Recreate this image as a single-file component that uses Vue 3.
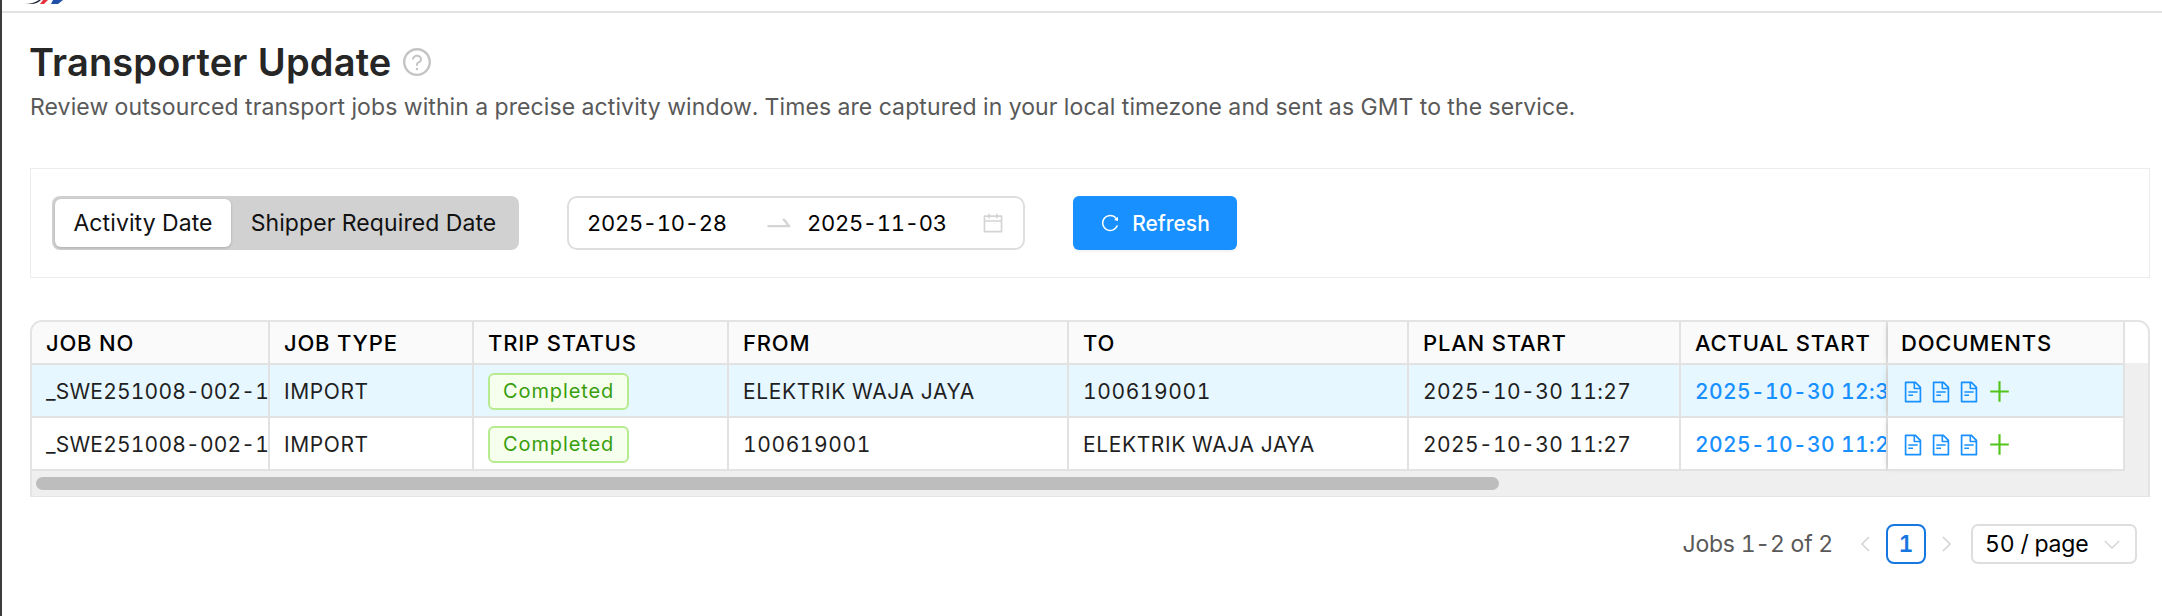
<script setup>
const columns = [
  { key: "jobNo", label: "JOB NO", cls: "c-job" },
  { key: "jobType", label: "JOB TYPE", cls: "c-type" },
  { key: "status", label: "TRIP STATUS", cls: "c-status" },
  { key: "from", label: "FROM", cls: "c-from" },
  { key: "to", label: "TO", cls: "c-to" },
  { key: "planStart", label: "PLAN START", cls: "c-plan" },
  { key: "actualStart", label: "ACTUAL START", cls: "c-actual" },
];

const rows = [
  {
    id: 1,
    jobNo: "_SWE251008-002-1",
    jobType: "IMPORT",
    status: "Completed",
    from: "ELEKTRIK WAJA JAYA",
    to: "100619001",
    planStart: "2025-10-30 11:27",
    actualStart: "2025-10-30 12:35",
    selected: true,
  },
  {
    id: 2,
    jobNo: "_SWE251008-002-1",
    jobType: "IMPORT",
    status: "Completed",
    from: "100619001",
    to: "ELEKTRIK WAJA JAYA",
    planStart: "2025-10-30 11:27",
    actualStart: "2025-10-30 11:28",
    selected: false,
  },
];

const fileIcon =
  "M854.6 288.6L639.4 73.4c-6-6-14.1-9.4-22.6-9.4H192c-17.7 0-32 14.3-32 32v832c0 17.7 14.3 32 32 32h640c17.7 0 32-14.3 32-32V311.3c0-8.5-3.4-16.7-9.4-22.7zM790.2 326H602V137.8L790.2 326zm1.8 562H232V136h302v216a42 42 0 0042 42h216v494zM504 618H320c-4.4 0-8 3.6-8 8v48c0 4.4 3.6 8 8 8h184c4.4 0 8-3.6 8-8v-48c0-4.4-3.6-8-8-8zM312 490v48c0 4.4 3.6 8 8 8h384c4.4 0 8-3.6 8-8v-48c0-4.4-3.6-8-8-8H320c-4.4 0-8 3.6-8 8z";
</script>

<template>
  <div class="shell">
    <header class="topbar">
      <svg class="logo" viewBox="0 0 40 4" width="40" height="4">
        <path d="M0 4 Q8 4 14 0 H16 Q12 4 6 4Z" fill="#1c2233" />
        <path d="M15 4 L18 0 H23 L19 4Z" fill="#e5343f" />
        <path d="M26 4 L28 0 H38 L33 4Z" fill="#1f4fa8" />
      </svg>
    </header>

    <main class="content">
      <div class="title-row">
        <h1>Transporter Update</h1>
        <svg class="help" viewBox="0 0 1024 1024" fill="#c4c4c4">
          <path d="M512 64C264.6 64 64 264.6 64 512s200.6 448 448 448 448-200.6 448-448S759.4 64 512 64zm0 820c-205.4 0-372-166.6-372-372s166.6-372 372-372 372 166.6 372 372-166.6 372-372 372z" />
          <path d="M623.6 316.7C593.6 290.4 554 276 512 276s-81.6 14.5-111.6 40.7C369.2 344 352 380.7 352 420v7.6c0 4.4 3.6 8 8 8h48c4.4 0 8-3.6 8-8V420c0-44.1 43.1-80 96-80s96 35.9 96 80c0 31.1-22 59.6-56.1 72.7-21.2 8.1-39.2 22.3-52.1 40.9-13.1 19-19.9 41.8-19.9 64.9V620c0 4.4 3.6 8 8 8h48c4.4 0 8-3.6 8-8v-22.7a48.3 48.3 0 0130.9-44.8c59-22.7 97.1-74.7 97.1-132.5.1-39.3-17.1-76-48.3-103.3zM472 732a40 40 0 1080 0 40 40 0 10-80 0z" />
        </svg>
      </div>
      <p class="subtitle">
        Review outsourced transport jobs within a precise activity window. Times are captured in your local timezone and sent as GMT to the service.
      </p>

      <section class="filters">
        <div class="segmented">
          <div class="seg-item active">Activity Date</div>
          <div class="seg-item">Shipper Required Date</div>
        </div>

        <div class="range">
          <span class="range-date first">2025-10-28</span>
          <svg class="range-arrow" viewBox="0 0 1024 1024" fill="#d4d4d4">
            <path d="M873.1 596.2l-164-208A32 32 0 00684 376h-64.8c-6.7 0-10.4 7.7-6.3 13l144.3 183H152c-4.4 0-8 3.6-8 8v60c0 4.4 3.6 8 8 8h695.9c26.8 0 41.7-30.8 25.2-51.8z" />
          </svg>
          <span class="range-date">2025-11-03</span>
          <svg class="range-cal" viewBox="0 0 1024 1024" fill="#d4d4d4">
            <path d="M880 184H712v-64c0-4.4-3.6-8-8-8h-56c-4.4 0-8 3.6-8 8v64H384v-64c0-4.4-3.6-8-8-8h-56c-4.4 0-8 3.6-8 8v64H144c-17.7 0-32 14.3-32 32v664c0 17.7 14.3 32 32 32h736c17.7 0 32-14.3 32-32V216c0-17.7-14.3-32-32-32zm-40 656H184V460h656v380zM184 392V256h128v48c0 4.4 3.6 8 8 8h56c4.4 0 8-3.6 8-8v-48h256v48c0 4.4 3.6 8 8 8h56c4.4 0 8-3.6 8-8v-48h128v136H184z" />
          </svg>
        </div>

        <button class="refresh" type="button">
          <svg viewBox="0 0 1024 1024" fill="#fff">
            <path d="M909.1 209.3l-56.4 44.1C775.8 155.1 656.2 92 521.9 92 290 92 102.3 279.5 102 511.5 101.7 743.7 289.8 932 521.9 932c181.3 0 335.8-115 394.6-276.1 1.5-4.2-.7-8.9-4.9-10.3l-56.7-19.5a8 8 0 00-10.1 4.8c-1.8 5-3.8 10-5.9 14.9-17.3 41-42.1 77.8-73.7 109.4A344.77 344.77 0 01655.9 829c-42.3 17.9-87.4 27-133.8 27-46.5 0-91.5-9.1-133.8-27A341.5 341.5 0 01279 755.2a342.16 342.16 0 01-73.7-109.4c-17.9-42.4-27-87.4-27-133.9s9.1-91.5 27-133.9c17.3-41 42.1-77.8 73.7-109.4 31.6-31.6 68.4-56.4 109.3-73.8 42.3-17.9 87.4-27 133.8-27 46.5 0 91.5 9.1 133.8 27a341.5 341.5 0 01109.3 73.8c9.9 9.9 19.2 20.4 27.8 31.4l-60.2 47a8 8 0 003 14.1l175.6 43c5 1.2 9.9-2.6 9.9-7.7l.8-180.9c-.1-6.6-7.8-10.3-13-6.2z" />
          </svg>
          <span>Refresh</span>
        </button>
      </section>

      <section class="table-card">
        <table class="jobs">
          <thead>
            <tr>
              <th v-for="col in columns" :key="col.key" :class="col.cls">{{ col.label }}</th>
              <th class="c-docs">DOCUMENTS</th>
              <th class="c-fill"></th>
            </tr>
          </thead>
          <tbody>
            <tr v-for="row in rows" :key="row.id" :class="{ selected: row.selected }">
              <td class="c-job">{{ row.jobNo }}</td>
              <td class="c-type">{{ row.jobType }}</td>
              <td class="c-status"><span class="tag">{{ row.status }}</span></td>
              <td class="c-from">{{ row.from }}</td>
              <td class="c-to">{{ row.to }}</td>
              <td class="c-plan">{{ row.planStart }}</td>
              <td class="c-actual link">{{ row.actualStart }}</td>
              <td class="c-docs">
                <div class="docs">
                  <svg v-for="n in 3" :key="n" class="doc" viewBox="0 0 1024 1024" fill="#1890ff">
                    <path :d="fileIcon" />
                  </svg>
                  <svg class="plus" viewBox="0 0 1024 1024" fill="#52c41a">
                    <path d="M482 152h60q8 0 8 8v704q0 8-8 8h-60q-8 0-8-8V160q0-8 8-8z" />
                    <path d="M192 474h640q8 0 8 8v60q0 8-8 8H192q-8 0-8-8v-60q0-8 8-8z" />
                  </svg>
                </div>
              </td>
              <td class="c-fill"></td>
            </tr>
          </tbody>
        </table>
        <div class="scroll-track"><div class="scroll-thumb"></div></div>
      </section>

      <footer class="pager">
        <span class="total">Jobs 1-2 of 2</span>
        <svg class="chev" viewBox="0 0 12 20"><path d="M10 3 3 10l7 7" /></svg>
        <span class="page">1</span>
        <svg class="chev" viewBox="0 0 12 20"><path d="M2 3l7 7-7 7" /></svg>
        <div class="size">
          <span>50 / page</span>
          <svg viewBox="0 0 20 12"><path d="M2 2l8 8 8-8" /></svg>
        </div>
      </footer>
    </main>
  </div>
</template>

<style>
html,
body {
  background: #fff;
  overflow: hidden;
}
</style>

<style scoped>
.shell {
  height: 616px;
  box-sizing: border-box;
  border-left: 2px solid #3c3c3c;
  font-family: Inter, "Liberation Sans", sans-serif;
  font-variant-numeric: tabular-nums;
  color: rgba(0, 0, 0, 0.88);
}

.topbar {
  height: 11px;
  border-bottom: 2px solid #e2e2e2;
  padding-left: 23px;
  overflow: hidden;
}
.logo {
  display: block;
}

.content {
  padding: 0 12px 0 28px;
}

.title-row {
  display: flex;
  align-items: center;
  gap: 10px;
  margin-top: 27px;
  height: 44px;
}
h1 {
  margin: 0 0 0 -1px;
  font-size: 38px;
  font-weight: 600;
  letter-spacing: 0.15px;
  color: #262626;
}
.help {
  width: 32px;
  height: 32px;
}
.subtitle {
  margin: 9px 0 0;
  font-size: 23px;
  line-height: 28px;
  letter-spacing: 0.1px;
  color: #595959;
}

.filters {
  display: flex;
  align-items: center;
  margin-top: 47px;
  height: 110px;
  box-sizing: border-box;
  border: 1px solid #ececec;
  padding-left: 21px;
}

.segmented {
  display: flex;
  width: 467px;
  height: 54px;
  box-sizing: border-box;
  padding: 3px;
  border-radius: 8px;
  background: #d1d1d1;
  font-size: 23px;
  letter-spacing: 0.1px;
  white-space: nowrap;
}
.seg-item {
  display: flex;
  align-items: center;
  justify-content: center;
  flex: 1;
  color: #111;
}
.seg-item.active {
  flex: 0 0 176px;
  background: #fff;
  border-radius: 6px;
  box-shadow: 0 1px 3px rgba(0, 0, 0, 0.18);
}

.range {
  display: flex;
  align-items: center;
  width: 458px;
  height: 54px;
  box-sizing: border-box;
  margin-left: 48px;
  padding: 0 18px;
  border: 2px solid #dedede;
  border-radius: 10px;
  font-size: 22px;
  letter-spacing: -0.3px;
  color: #000;
}
.range-date {
  width: 140px;
  white-space: nowrap;
}
.range-date.first {
  width: 176px;
}
.range-arrow {
  width: 32px;
  height: 32px;
  margin-right: 12px;
}
.range-cal {
  width: 24px;
  height: 24px;
  margin-left: auto;
}

.refresh {
  display: flex;
  align-items: center;
  justify-content: center;
  gap: 12px;
  width: 164px;
  height: 54px;
  margin-left: 48px;
  border: none;
  border-radius: 6px;
  background: #1890ff;
  box-shadow: 0 2px 2px rgba(0, 0, 0, 0.05);
  color: #fff;
  font-family: inherit;
  font-size: 21px;
  font-weight: 500;
}
.refresh svg {
  width: 20px;
  height: 20px;
}

.table-card {
  margin-top: 42px;
  height: 177px;
  box-sizing: border-box;
  border: 2px solid #e4e4e4;
  border-bottom-width: 1px;
  border-radius: 12px 12px 0 0;
  background: #efefef;
  position: relative;
  overflow: hidden;
}

.jobs {
  width: 2116px;
  table-layout: fixed;
  border-collapse: separate;
  border-spacing: 0;
  font-size: 21px;
  letter-spacing: 0.6px;
  color: #1f1f1f;
}
th,
td {
  box-sizing: border-box;
  padding: 0 14px;
  border-right: 2px solid #e2e2e2;
  border-bottom: 2px solid #e2e2e2;
  text-align: left;
  white-space: nowrap;
  overflow: hidden;
  background: #fff;
}
th {
  height: 43px;
  background: #fafafa;
  color: #000;
  font-size: 22px;
  font-weight: 500;
  letter-spacing: 0.8px;
}
td {
  height: 53px;
  padding-top: 2px;
}
tr.selected td {
  background: #e6f7ff;
}

.c-job { width: 238px; padding-right: 0; }
td.c-job { letter-spacing: 0.2px; }
.c-type { width: 204px; }
.c-status { width: 255px; }
.c-from { width: 340px; }
.c-to { width: 340px; }
.c-plan { width: 272px; }
td.c-plan { letter-spacing: 0.4px; }
.c-actual { width: 207px; padding-right: 0; }
td.c-actual { letter-spacing: 0.4px; }
.c-docs {
  width: 237px;
  position: relative;
  box-shadow: -4px 0 6px -3px rgba(0, 0, 0, 0.12);
}
th.c-docs {
  padding-left: 13px;
}
td.c-docs {
  padding-left: 16px;
}
th.c-fill {
  padding: 0;
  border-right: none;
  border-bottom-color: #efefef;
  background: #fff;
}
td.c-fill,
tr.selected td.c-fill {
  padding: 0;
  border: none;
  background: transparent;
}

.link {
  color: #1890ff;
  font-weight: 500;
}
.tag {
  display: inline-block;
  height: 37px;
  box-sizing: border-box;
  padding: 0 13px;
  border: 2px solid #b7eb8f;
  border-radius: 6px;
  background: #f6ffed;
  color: #389e0d;
  font-size: 20px;
  line-height: 33px;
  font-weight: 400;
  vertical-align: middle;
  letter-spacing: 0.9px;
}

.docs {
  display: flex;
  align-items: center;
}
.doc {
  width: 24px;
  height: 24px;
  margin-right: 4px;
  margin-left: -3px;
  flex: none;
}
.doc + .doc {
  margin-left: 0;
}
.plus {
  width: 29px;
  height: 29px;
  margin-left: 0;
  flex: none;
}

.scroll-track {
  position: absolute;
  left: 0;
  right: 0;
  bottom: 0;
  height: 25px;
  padding: 6px 4px;
  box-sizing: border-box;
}
.scroll-thumb {
  width: 1463px;
  height: 13px;
  border-radius: 7px;
  background: #bdbdbd;
}

.pager {
  display: flex;
  align-items: center;
  justify-content: flex-end;
  margin-top: 27px;
  padding-right: 13px;
  height: 40px;
  font-size: 23px;
}
.total {
  color: #595959;
  margin-right: 26px;
  letter-spacing: -0.25px;
}
.chev {
  width: 12px;
  height: 20px;
  fill: none;
  stroke: #d4d4d4;
  stroke-width: 1.6;
}
.page {
  display: flex;
  align-items: center;
  justify-content: center;
  width: 40px;
  height: 40px;
  margin: 0 15px;
  box-sizing: border-box;
  border: 2px solid #1677e0;
  border-radius: 8px;
  color: #1677e0;
  font-weight: 600;
}
.size {
  display: flex;
  align-items: center;
  justify-content: space-between;
  width: 166px;
  height: 40px;
  margin-left: 18px;
  box-sizing: border-box;
  padding: 0 14px 0 12px;
  border: 2px solid #dedede;
  border-radius: 7px;
  letter-spacing: -0.2px;
  color: #000;
}
.size svg {
  width: 18px;
  height: 11px;
  fill: none;
  stroke: #d4d4d4;
  stroke-width: 1.6;
}
</style>
